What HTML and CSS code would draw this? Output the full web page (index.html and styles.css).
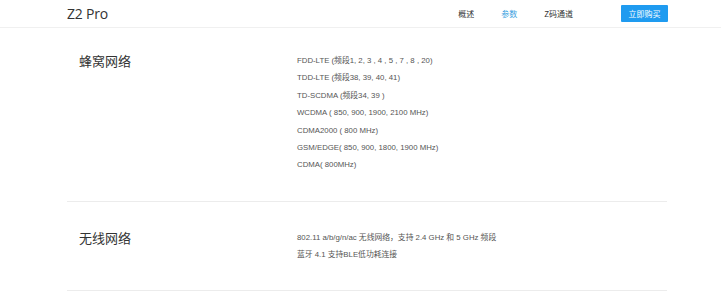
FILE: index.html
```html
<!DOCTYPE html>
<html lang="zh-CN">
<head>
<meta charset="utf-8">
<title>Z2 Pro 参数</title>
<link rel="stylesheet" href="styles.css">
</head>
<body>
<header class="topbar">
  <div class="topbar-inner">
    <div class="logo">Z2 Pro</div>
    <nav class="nav">
      <a class="nav-item">概述</a>
      <a class="nav-item active">参数</a>
      <a class="nav-item">Z码通道</a>
      <a class="buy">立即购买</a>
    </nav>
  </div>
</header>
<main class="specs">
  <section class="spec">
    <h2 class="spec-title">蜂窝网络</h2>
    <div class="spec-list">
      <p>FDD-LTE (频段1, 2, 3 , 4 , 5 , 7 , 8 , 20)</p>
      <p>TDD-LTE (频段38, 39, 40, 41)</p>
      <p>TD-SCDMA (频段34, 39 )</p>
      <p>WCDMA ( 850, 900, 1900, 2100 MHz)</p>
      <p>CDMA2000 ( 800 MHz)</p>
      <p>GSM/EDGE( 850, 900, 1800, 1900 MHz)</p>
      <p>CDMA( 800MHz)</p>
    </div>
  </section>
  <section class="spec">
    <h2 class="spec-title">无线网络</h2>
    <div class="spec-list">
      <p>802.11 a/b/g/n/ac 无线网络，支持 2.4 GHz 和 5 GHz 频段</p>
      <p>蓝牙 4.1 支持BLE低功耗连接</p>
    </div>
  </section>
</main>
</body>
</html>
```
FILE: styles.css
```css
* { box-sizing: border-box; }
html, body { margin: 0; padding: 0; background: #fff; }
body {
  font-family: "Liberation Sans", "Noto Sans CJK SC", sans-serif;
  color: #333;
}
.topbar {
  height: 28px;
  border-bottom: 1px solid #f0f0f0;
}
.topbar-inner {
  width: 600px;
  margin-left: 67px;
  height: 27px;
  display: flex;
  align-items: center;
  justify-content: space-between;
}
.logo {
  font-family: "Open Sans", "Noto Sans", sans-serif;
  font-size: 14px;
  color: #333;
  letter-spacing: -0.2px;
}
.nav {
  display: flex;
  align-items: center;
  font-family: "Noto Sans CJK SC", sans-serif;
  font-size: 8px;
}
.nav-item {
  color: #333;
  margin-right: 27px;
}
.nav-item.active { color: #3a9fe0; }
.nav-item:nth-child(3) { margin-right: 48px; }
.buy {
  display: flex;
  align-items: center;
  justify-content: center;
  width: 47px;
  height: 17px;
  background: #1f9bf0;
  color: #fff;
  border-radius: 1px;
  margin-right: -1px;
}
.specs {
  width: 600px;
  margin-left: 67px;
}
.spec {
  display: flex;
  border-bottom: 1px solid #ececec;
  padding: 24px 0 27px;
}
.spec + .spec { padding: 27px 0 26px; }
.spec-title {
  width: 230px;
  margin: 0;
  padding-left: 12px;
  font-family: "Noto Sans CJK SC", sans-serif;
  font-weight: normal;
  font-size: 13px;
  line-height: 17px;
  color: #333;
}
.spec-list p {
  margin: 0;
  font-size: 7.8px;
  line-height: 17.4px;
  color: #555;
}
```
